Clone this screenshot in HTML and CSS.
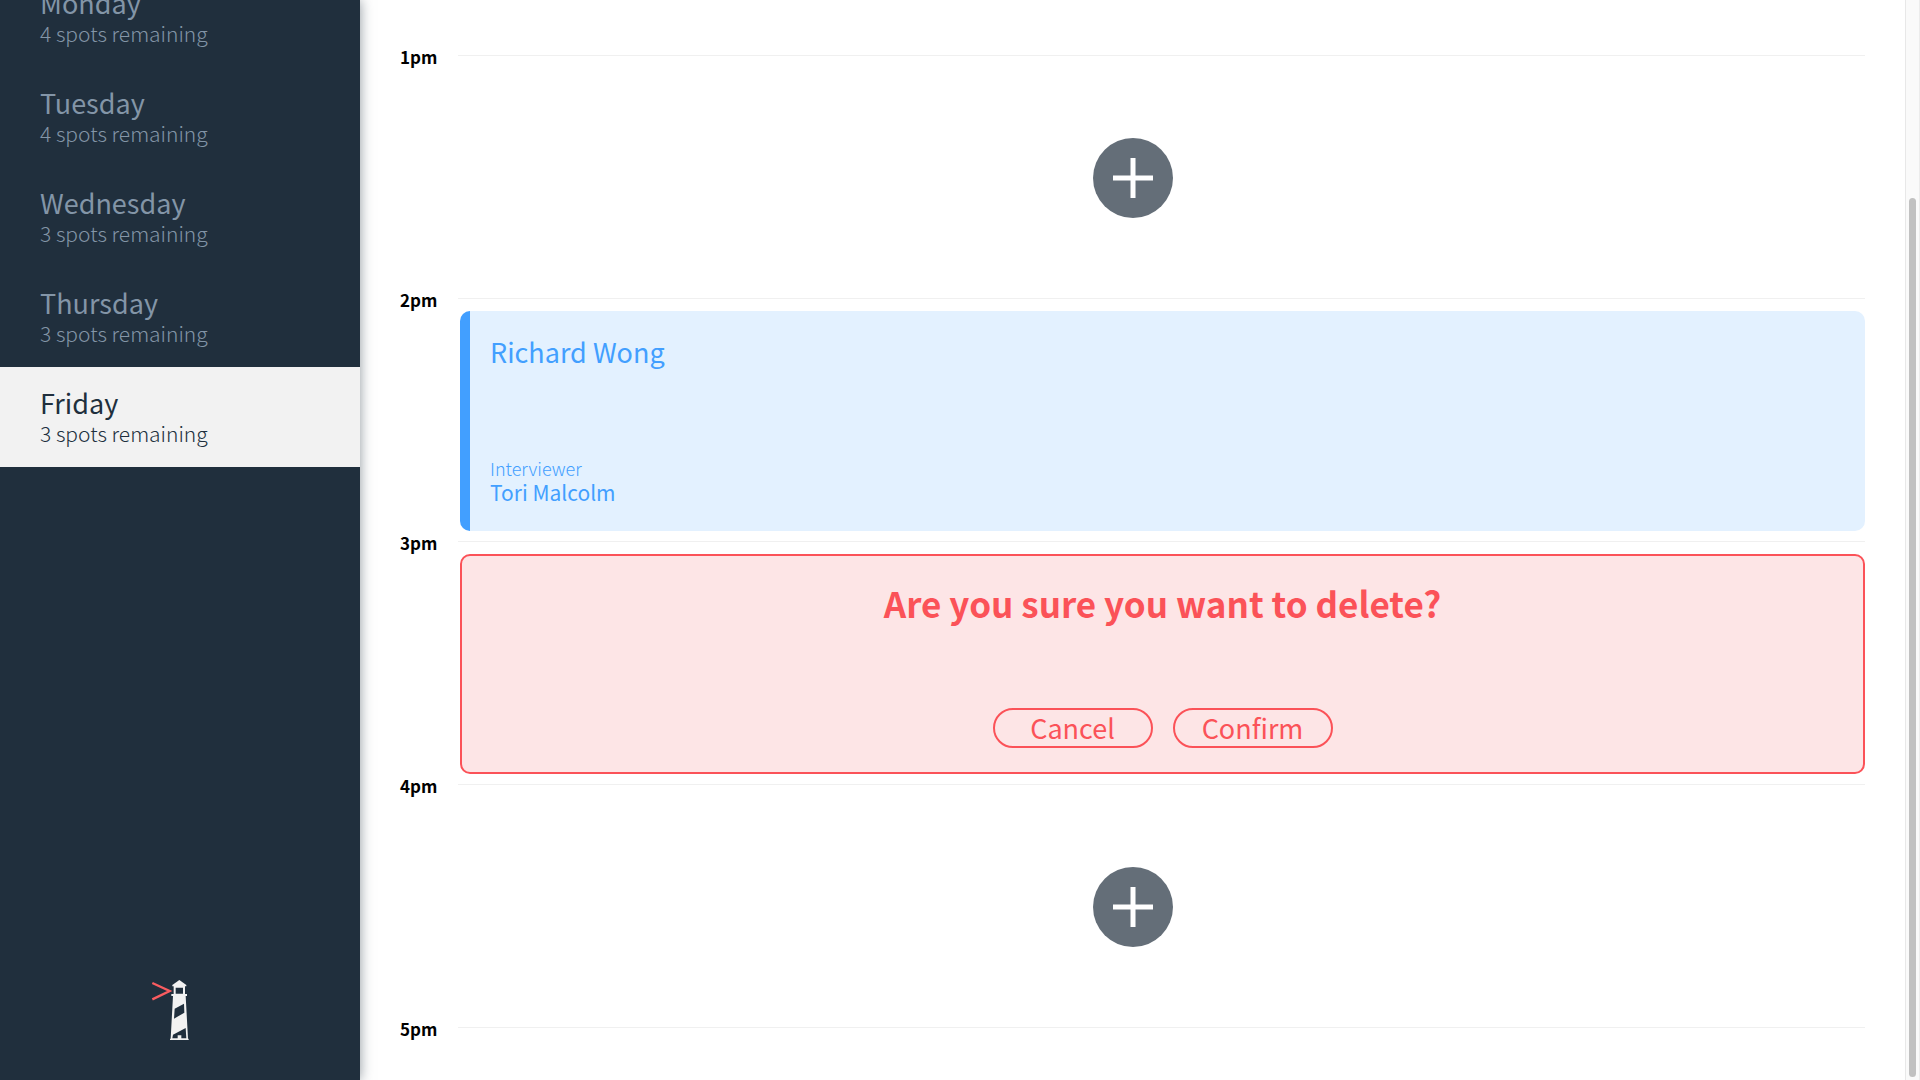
FILE: index.html
```html
<!DOCTYPE html>
<html lang="en">
<head>
<meta charset="utf-8">
<title>Interview Scheduler</title>
<link rel="stylesheet" href="styles.css">
</head>
<body>
<div class="layout">
  <aside class="sidebar">
    <nav class="days" aria-label="Days">
      <a class="day" href="#monday"><span class="day-name">Monday</span><span class="day-spots">4 spots remaining</span></a>
      <a class="day" href="#tuesday"><span class="day-name">Tuesday</span><span class="day-spots">4 spots remaining</span></a>
      <a class="day" href="#wednesday"><span class="day-name">Wednesday</span><span class="day-spots">3 spots remaining</span></a>
      <a class="day" href="#thursday"><span class="day-name">Thursday</span><span class="day-spots">3 spots remaining</span></a>
      <a class="day day-selected" href="#friday" aria-current="true"><span class="day-name">Friday</span><span class="day-spots">3 spots remaining</span></a>
    </nav>
    <svg class="logo" viewBox="63 60 174 180" role="img" aria-label="Lighthouse Labs">
      <path d="M67 69 L119 93 L67 118" fill="none" stroke="#fa5c60" stroke-width="7"/>
      <path d="M148 60 L169 75 V79 H127 V75 Z" fill="#f2f2f2"/>
      <path d="M131 78 H165 V104 H131 Z M137 83 V101 H159 V83 Z" fill="#f2f2f2" fill-rule="evenodd"/>
      <path d="M124 102 H171 V108 H167 L174 236 H176 V240 H120 V236 H122 L129 108 H124 Z" fill="#f2f2f2"/>
      <path d="M134 146 L162 131 L163 158 L132 176 Z M129 224 L167 204 L169 235 H154 V226 H143 V235 H127 Z" fill="#202f3d"/>
    </svg>
  </aside>
  <main class="schedule">
    <section class="slot">
      <header class="slot-header"><h2 class="slot-time">1pm</h2><hr class="slot-line"></header>
      <div class="slot-empty">
        <button class="add" type="button" aria-label="Add appointment"><svg class="add-icon" viewBox="0 0 80 80" aria-hidden="true"><circle cx="40" cy="40" r="40" fill="#646e78"/><path d="M40 20 V60 M20 40 H60" stroke="#fff" stroke-width="5"/></svg></button>
      </div>
    </section>
    <section class="slot">
      <header class="slot-header"><h2 class="slot-time">2pm</h2><hr class="slot-line"></header>
      <article class="card card-show">
        <h3 class="student">Richard Wong</h3>
        <div class="interviewer">
          <h4 class="interviewer-label">Interviewer</h4>
          <p class="interviewer-name">Tori Malcolm</p>
        </div>
      </article>
    </section>
    <section class="slot">
      <header class="slot-header"><h2 class="slot-time">3pm</h2><hr class="slot-line"></header>
      <article class="card card-confirm">
        <h3 class="question">Are you sure you want to delete?</h3>
        <div class="actions">
          <button class="button" type="button">Cancel</button>
          <button class="button" type="button">Confirm</button>
        </div>
      </article>
    </section>
    <section class="slot">
      <header class="slot-header"><h2 class="slot-time">4pm</h2><hr class="slot-line"></header>
      <div class="slot-empty">
        <button class="add" type="button" aria-label="Add appointment"><svg class="add-icon" viewBox="0 0 80 80" aria-hidden="true"><circle cx="40" cy="40" r="40" fill="#646e78"/><path d="M40 20 V60 M20 40 H60" stroke="#fff" stroke-width="5"/></svg></button>
      </div>
    </section>
    <section class="slot">
      <header class="slot-header"><h2 class="slot-time">5pm</h2><hr class="slot-line"></header>
    </section>
  </main>
  <div class="scrollbar" aria-hidden="true"><div class="scrollbar-thumb"></div></div>
</div>
</body>
</html>
```
FILE: styles.css
```css
* {
  box-sizing: border-box;
  margin: 0;
  padding: 0;
}

body {
  background: #fff;
  color: #000;
  font-family: "Noto Sans CJK SC", "Open Sans", sans-serif;
}

.layout {
  display: grid;
  grid-template-columns: 360px 1fr 15px;
  height: 100vh;
  overflow: hidden;
}

/* Sidebar */
.sidebar {
  display: flex;
  flex-direction: column;
  justify-content: space-between;
  align-items: center;
  height: 100vh;
  padding-bottom: 40px;
  background: #202f3d;
  box-shadow: 0 0 12px rgba(32, 47, 61, 0.5);
}

.days {
  width: 100%;
  margin-top: -33px;
}

.day {
  display: flex;
  flex-direction: column;
  justify-content: center;
  height: 100px;
  padding: 2px 40px 0;
  color: #8395a7;
  text-decoration: none;
}

.day-selected {
  background: #f2f2f2;
  color: #202f3d;
}

.day-name {
  font-size: 27px;
  line-height: 30px;
}

.day-spots {
  font-size: 21px;
  font-weight: 300;
  line-height: 30px;
}

.logo {
  width: 58px;
  height: 60px;
}

/* Schedule */
.schedule {
  min-width: 0;
  padding: 45px 40px 0;
}

.slot-header {
  display: flex;
  align-items: center;
  height: 20px;
  margin-bottom: 3px;
}

.slot-time {
  width: 58px;
  padding-top: 3px;
  font-size: 17px;
  font-weight: 700;
  line-height: 24px;
}

.slot-line {
  flex: 1;
  border: 0;
  border-top: 1px solid #f0f0f0;
}

.slot-empty {
  display: flex;
  align-items: center;
  justify-content: center;
  height: 220px;
  padding-right: 60px;
  margin-left: 60px;
}

.add {
  width: 80px;
  height: 80px;
  border: 0;
  border-radius: 50%;
  background: none;
  cursor: pointer;
}

.add-icon {
  display: block;
  width: 80px;
  height: 80px;
}

.card {
  display: flex;
  flex-direction: column;
  justify-content: space-between;
  height: 220px;
  margin-left: 60px;
  border-radius: 10px;
}

.card-show {
  padding: 23px 20px 27px;
  border-left: 10px solid #429fff;
  background: #e3f1ff;
  color: #429fff;
}

.student {
  font-size: 27px;
  font-weight: 400;
  line-height: 36px;
}

.interviewer-label {
  font-size: 18px;
  font-weight: 300;
  line-height: 24px;
}

.interviewer-name {
  font-size: 21px;
  font-weight: 400;
  line-height: 24px;
}

.card-confirm {
  align-items: center;
  padding: 23px 20px 24px;
  border: 2px solid #fb5258;
  background: #fde5e6;
  color: #fb5258;
}

.question {
  font-size: 35px;
  font-weight: 700;
  line-height: 48px;
}

.actions {
  display: flex;
  gap: 20px;
}

.button {
  display: flex;
  align-items: center;
  justify-content: center;
  width: 160px;
  height: 40px;
  border: 2px solid #fb5258;
  border-radius: 20px;
  background: none;
  color: #fb5258;
  font-family: inherit;
  font-size: 27px;
  line-height: 36px;
  cursor: pointer;
}

/* Scrollbar */
.scrollbar {
  display: flex;
  padding: 198px 3px 3px;
  border-left: 1px solid #e8e8e8;
  border-right: 1px solid #ececec;
  background: #fafafa;
}

.scrollbar-thumb {
  flex: 1;
  border-radius: 4px;
  background: #c1c1c1;
}
```
